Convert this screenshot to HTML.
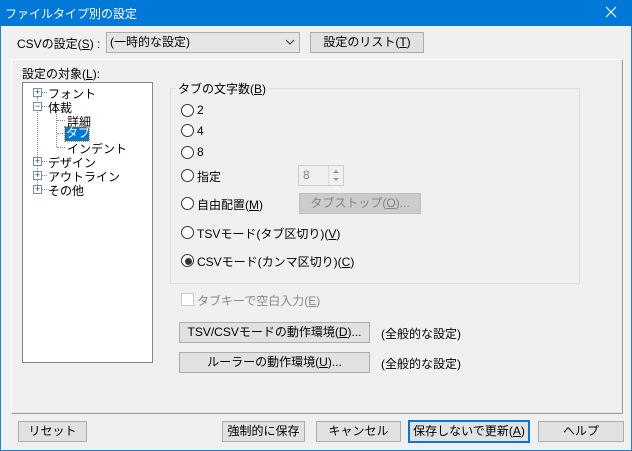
<!DOCTYPE html><html><head><meta charset="utf-8"><style>
*{box-sizing:border-box}
body{margin:0;width:632px;height:451px;overflow:hidden;background:#f0f0f0;font-family:"Liberation Sans","Noto Sans CJK JP",sans-serif;font-size:12px;color:#000;position:relative}
.a{position:absolute;white-space:nowrap}
.btn{position:absolute;background:#e1e1e1;border:1px solid #adadad;text-align:center;line-height:19px;height:21px}
.r{position:absolute;width:13px;height:13px;border:1px solid #333;border-radius:50%;background:#fff}
.pb{position:absolute;width:9px;height:9px;border:1px solid #7a8ca0;background:#fff;font-size:9px;line-height:7px;text-align:center;color:#1a3d8f}
.dv{position:absolute;border-left:1px dotted #888}
.dh{position:absolute;border-top:1px dotted #888}
</style></head><body>
<div class="a" style="left:0;top:0;width:632px;height:451px;border:1px solid #1a7fd8"></div>
<div class="a" style="left:0;top:0;width:632px;height:26px;background:#0078d7"></div>
<div class="a" style="left:5px;top:5px;color:#fff;font-size:12px">ファイルタイプ別の設定</div>
<svg class="a" style="left:605px;top:6px" width="12" height="12"><path d="M1 1L11 11M11 1L1 11" stroke="#fff" stroke-width="1.2"/></svg>

<div class="a" style="left:17px;top:35px">CSVの設定(<u>S</u>) :</div>
<div class="a" style="left:106px;top:32px;width:194px;height:21px;background:#e5e5e5;border:1px solid #adadad;padding-left:3px;line-height:19px">(一時的な設定)</div>
<svg class="a" style="left:285px;top:39px" width="10" height="6"><path d="M1 1L5 5L9 1" stroke="#333" fill="none"/></svg>
<div class="btn" style="left:310px;top:32px;width:114px">設定のリスト(<u>T</u>)</div>

<div class="a" style="left:11px;top:59px;width:612px;height:355px;border:1px solid #fff;border-right-color:#a0a0a0;border-bottom-color:#a0a0a0;box-shadow:inset -1px -1px 0 #e3e3e3"></div>
<div class="a" style="left:22px;top:65px">設定の対象(<u>L</u>):</div>
<div class="a" style="left:22px;top:82px;width:131px;height:281px;background:#fff;border:1px solid #828790"></div>
<div class="dv" style="left:37px;top:97px;height:92px"></div>
<div class="dv" style="left:56px;top:111px;height:36px"></div>
<div class="dh" style="left:42px;top:92px;width:5px"></div>
<div class="dh" style="left:42px;top:106px;width:5px"></div>
<div class="dh" style="left:57px;top:120px;width:8px"></div>
<div class="dh" style="left:57px;top:133px;width:8px"></div>
<div class="dh" style="left:57px;top:147px;width:8px"></div>
<div class="dh" style="left:42px;top:161px;width:5px"></div>
<div class="dh" style="left:42px;top:175px;width:5px"></div>
<div class="dh" style="left:42px;top:189px;width:5px"></div>
<div class="pb" style="left:33px;top:88px">+</div>
<div class="pb" style="left:33px;top:102px">−</div>
<div class="pb" style="left:33px;top:157px">+</div>
<div class="pb" style="left:33px;top:171px">+</div>
<div class="pb" style="left:33px;top:185px">+</div>
<div class="a" style="left:48px;top:85px">フォント</div>
<div class="a" style="left:48px;top:99px">体裁</div>
<div class="a" style="left:67px;top:113px">詳細</div>
<div class="a" style="left:65px;top:127px;width:24px;height:14px;background:#0078d7;outline:1px dotted #f08000;color:#fff;padding-left:1px;line-height:13px">タブ</div>
<div class="a" style="left:67px;top:140px">インデント</div>
<div class="a" style="left:48px;top:154px">デザイン</div>
<div class="a" style="left:48px;top:168px">アウトライン</div>
<div class="a" style="left:48px;top:182px">その他</div>

<div class="a" style="left:170px;top:88px;width:410px;height:196px;border:1px solid #dcdcdc"></div>
<div class="a" style="left:176px;top:80px;background:#f0f0f0;padding:0 2px">タブの文字数(<u>B</u>)</div>
<div class="r" style="left:181px;top:104px"></div><div class="a" style="left:197px;top:103px">2</div>
<div class="r" style="left:181px;top:124px"></div><div class="a" style="left:197px;top:124px">4</div>
<div class="r" style="left:181px;top:146px"></div><div class="a" style="left:197px;top:145px">8</div>
<div class="r" style="left:181px;top:169px"></div><div class="a" style="left:197px;top:168px">指定</div>
<div class="a" style="left:298px;top:165px;width:46px;height:21px;border:1px solid #ccc;background:#f0f0f0;color:#888;padding-left:4px;line-height:18px">8</div>
<div class="a" style="left:328px;top:166px;width:15px;height:19px;border-left:1px solid #ddd"></div>
<svg class="a" style="left:332px;top:169px" width="8" height="14"><path d="M1 4L4 1L7 4Z M1 9L4 12L7 9Z" fill="#999"/></svg>
<div class="r" style="left:181px;top:197px"></div><div class="a" style="left:197px;top:196px">自由配置(<u>M</u>)</div>
<div class="btn" style="left:299px;top:193px;width:122px;background:#cccccc;border-color:#bfbfbf;color:#838383">タブストップ(<u>O</u>)...</div>
<div class="r" style="left:181px;top:226px"></div><div class="a" style="left:197px;top:225px">TSVモード(タブ区切り)(<u>V</u>)</div>
<div class="r" style="left:181px;top:254px"></div><div class="a" style="left:185px;top:258px;width:7px;height:7px;border-radius:50%;background:#333"></div><div class="a" style="left:197px;top:253px">CSVモード(カンマ区切り)(<u>C</u>)</div>

<div class="a" style="left:181px;top:293px;width:13px;height:13px;border:1px solid #ccc;background:#fff"></div>
<div class="a" style="left:197px;top:292px;color:#888">タブキーで空白入力(<u>E</u>)</div>
<div class="btn" style="left:179px;top:322px;width:191px">TSV/CSVモードの動作環境(<u>D</u>)...</div>
<div class="a" style="left:381px;top:325px">(全般的な設定)</div>
<div class="btn" style="left:179px;top:352px;width:191px">ルーラーの動作環境(<u>U</u>)...</div>
<div class="a" style="left:381px;top:355px">(全般的な設定)</div>

<div class="btn" style="left:18px;top:421px;width:69px">リセット</div>
<div class="btn" style="left:222px;top:421px;width:83px">強制的に保存</div>
<div class="btn" style="left:316px;top:421px;width:85px">キャンセル</div>
<div class="btn" style="left:408px;top:420px;width:122px;height:23px;border:2px solid #0078d7;line-height:19px">保存しないで更新(<u>A</u>)</div>
<div class="btn" style="left:538px;top:421px;width:86px">ヘルプ</div>
</body></html>
